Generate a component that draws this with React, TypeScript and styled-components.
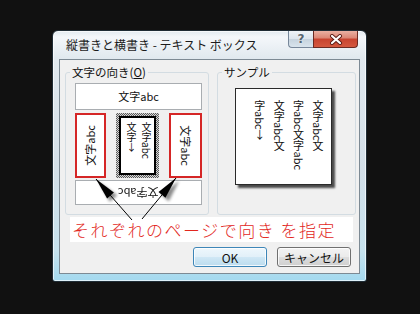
import React from 'react';
import styled, {createGlobalStyle} from 'styled-components';

const GlobalStyle = createGlobalStyle`
  html, body {
    margin: 0;
    padding: 0;
    background: #111111;
  }
  body {
    font-family: "Noto Sans CJK JP", "Noto Sans", sans-serif;
  }
`;

const Screen = styled.div`
  width: 420px;
  height: 314px;
  box-sizing: border-box;
  padding: 30px 0 0 52px;
  background: #111111;
`;

const Window = styled.div`
  width: 315px;
  height: 252px;
  box-sizing: border-box;
  display: flex;
  flex-direction: column;
  padding: 0 6px 7px 6px;
  border: 1px solid #1f2c35;
  border-radius: 6px 6px 3px 3px;
  background: linear-gradient(180deg, #e2eaf0 0, #f4f7fa 6px, #e1e9ef 27px, #d3dfe8 55%, #c6e2ee 88%, #a3d9ef 100%);
  box-shadow: inset 0 0 0 1px rgba(255, 255, 255, 0.65);
`;

const TitleBar = styled.div`
  height: 28px;
  flex: none;
  display: flex;
  align-items: flex-start;
`;

const Title = styled.div`
  align-self: center;
  margin-left: 7px;
  font-size: 12px;
  line-height: 16px;
  color: #1c1c1c;
  white-space: nowrap;
  flex: 1;
`;

const CaptionButtons = styled.div`
  display: flex;
  margin-right: 2px;
`;

const HelpButton = styled.div`
  width: 25px;
  height: 17px;
  box-sizing: border-box;
  border: 1px solid #77879a;
  border-top: none;
  border-right: none;
  border-radius: 0 0 0 4px;
  background: linear-gradient(180deg, #eef3f7 0%, #dce5ed 48%, #c6d3de 52%, #d9e4ed 100%);
  display: flex;
  align-items: center;
  justify-content: center;
  font-family: "DejaVu Sans", sans-serif;
  font-weight: bold;
  font-size: 12px;
  color: #56656f;
  text-shadow: 0 0 2px #ffffff;
`;

const CloseButton = styled.div`
  width: 45px;
  height: 17px;
  box-sizing: border-box;
  border: 1px solid #6b2a22;
  border-top: none;
  border-radius: 0 0 4px 0;
  background: linear-gradient(180deg, #eab0a2 0%, #dc8877 42%, #c84430 52%, #d4583f 100%);
  display: flex;
  align-items: center;
  justify-content: center;
`;

const Client = styled.div`
  flex: 1;
  position: relative;
  display: flex;
  flex-direction: column;
  background: #f0f0f0;
  border: 1px solid #7d8a94;
`;

const GroupsRow = styled.div`
  display: flex;
  gap: 8px;
  padding: 5px 3px 0 5px;
`;

const Group = styled.fieldset<{$width: number}>`
  margin: 0;
  width: ${p => p.$width}px;
  height: 150px;
  min-width: 0;
  box-sizing: border-box;
  padding: 4px 4px 9px 4px;
  border: 1px solid #d3dce2;
  border-radius: 3px;
`;

const Legend = styled.legend`
  padding: 0 2px;
  font-size: 11.5px;
  line-height: 14px;
  color: #111111;
`;

const Options = styled.div`
  margin-left: 5px;
  width: 127px;
  display: flex;
  flex-direction: column;
`;

const HorizBox = styled.div<{$height: number}>`
  height: ${p => p.$height}px;
  box-sizing: border-box;
  border: 1px solid #a9adb1;
  background: #ffffff;
  display: flex;
  align-items: center;
  justify-content: center;
  overflow: hidden;
`;

const VertRow = styled.div`
  height: 65px;
  margin: 3px 0 2px;
  display: flex;
  justify-content: space-between;
`;

const RedBox = styled.div<{$width: number}>`
  width: ${p => p.$width}px;
  box-sizing: border-box;
  border: 2px solid #d52626;
  background: #ffffff;
  display: flex;
  align-items: center;
  justify-content: center;
  overflow: hidden;
`;

const SelectedRing = styled.div`
  width: 43px;
  box-sizing: border-box;
  padding: 3px;
  background: repeating-conic-gradient(#5a5a5a 0 25%, #d8d8d8 0 50%) 0 0 / 2px 2px;
`;

const SelectedBox = styled.div`
  height: 100%;
  box-sizing: border-box;
  border: 2px solid #000000;
  background: #ffffff;
  display: flex;
  justify-content: center;
  padding: 4px 0 0 3px;
`;

const OptionLabel = styled.span<{$rotate: number}>`
  display: inline-block;
  font-size: 11px;
  line-height: 13px;
  white-space: nowrap;
  color: #111111;
  transform: rotate(${p => p.$rotate}deg);
`;

const VerticalText = styled.div<{$size: number; $line: number}>`
  writing-mode: vertical-rl;
  font-size: ${p => p.$size}px;
  line-height: ${p => p.$line}px;
  color: #111111;
  white-space: nowrap;
`;

const Mark = styled.span`
  text-orientation: upright;
`;

const Paper = styled.div`
  margin: 5px 0 0 13px;
  width: 97px;
  height: 97px;
  box-sizing: border-box;
  border: 1px solid #2a2a2a;
  background: #ffffff;
  box-shadow: 3px 3px 2px #4a4a4a;
  display: flex;
  justify-content: flex-end;
  padding: 11px 4px 0 0;
`;

const Band = styled.div`
  margin: 2px 6px 0 10px;
  height: 25px;
  background: #ffffff;
  padding-left: 2px;
  font-size: 17px;
  font-weight: 300;
  line-height: 25px;
  letter-spacing: 1.5px;
  color: #e2271d;
  white-space: nowrap;
`;

const ButtonRow = styled.div`
  margin-top: 5px;
  display: flex;
  justify-content: flex-end;
  gap: 10px;
  padding-right: 8px;
`;

const Button = styled.div<{$default?: boolean}>`
  width: 74px;
  height: 20px;
  box-sizing: border-box;
  border: 1px solid ${p => (p.$default ? '#3d86b8' : '#707070')};
  border-radius: 3px;
  background: ${p => p.$default
    ? 'linear-gradient(180deg, #eef7fc 0%, #e2f0f9 48%, #cfe7f5 52%, #bcdcee 100%)'
    : 'linear-gradient(180deg, #f3f3f3 0%, #ebebeb 48%, #dddddd 52%, #cfcfcf 100%)'};
  box-shadow: inset 0 0 0 1px rgba(255, 255, 255, 0.8);
  display: flex;
  align-items: center;
  justify-content: center;
  font-size: 12px;
  color: #111111;
`;

const Arrows = styled.svg`
  position: absolute;
  left: 0;
  top: 0;
  pointer-events: none;
`;

type Pt = [number, number];

const headPoints = (tip: Pt, tail: Pt, len: number, half: number): string => {
  const dx = tip[0] - tail[0];
  const dy = tip[1] - tail[1];
  const d = Math.hypot(dx, dy);
  const ux = dx / d;
  const uy = dy / d;
  const bx = tip[0] - ux * len;
  const by = tip[1] - uy * len;
  const px = -uy * half;
  const py = ux * half;
  return `${tip[0]},${tip[1]} ${bx + px},${by + py} ${bx - px},${by - py}`;
};

const arrows: {tip: Pt; tail: Pt}[] = [
  {tip: [36, 119], tail: [72, 160]},
  {tip: [116, 118], tail: [82, 159]},
];

const App = () => {
  return (
    <Screen>
      <GlobalStyle />
      <Window>
        <TitleBar>
          <Title>縦書きと横書き - テキスト ボックス</Title>
          <CaptionButtons>
            <HelpButton>?</HelpButton>
            <CloseButton>
              <svg width="14" height="11" viewBox="0 0 14 11">
                <path d="M3 2 L11 9 M11 2 L3 9" stroke="#5a1a14" strokeWidth="4" strokeLinecap="round" />
                <path d="M3 2 L11 9 M11 2 L3 9" stroke="#ffffff" strokeWidth="2.2" strokeLinecap="round" />
              </svg>
            </CloseButton>
          </CaptionButtons>
        </TitleBar>
        <Client>
          <GroupsRow>
            <Group $width={144}>
              <Legend>文字の向き(<u>O</u>)</Legend>
              <Options>
                <HorizBox $height={27}>
                  <OptionLabel $rotate={0}>文字abc</OptionLabel>
                </HorizBox>
                <VertRow>
                  <RedBox $width={31}>
                    <OptionLabel $rotate={-90}>文字abc</OptionLabel>
                  </RedBox>
                  <SelectedRing>
                    <SelectedBox>
                      <VerticalText $size={10} $line={15}>
                        文字abc<br />文字<Mark>↓</Mark>
                      </VerticalText>
                    </SelectedBox>
                  </SelectedRing>
                  <RedBox $width={33}>
                    <OptionLabel $rotate={90}>文字abc</OptionLabel>
                  </RedBox>
                </VertRow>
                <HorizBox $height={25}>
                  <OptionLabel $rotate={180}>文字abc</OptionLabel>
                </HorizBox>
              </Options>
            </Group>
            <Group $width={139}>
              <Legend>サンプル</Legend>
              <Paper>
                <VerticalText $size={11} $line={19.4}>
                  文字abc文<br />字abc文字abc<br />文字abc文<br />字abc<Mark>↓</Mark>
                </VerticalText>
              </Paper>
            </Group>
          </GroupsRow>
          <Band>それぞれのページで向き を指定</Band>
          <ButtonRow>
            <Button $default>OK</Button>
            <Button>キャンセル</Button>
          </ButtonRow>
          <Arrows width="300" height="170">
            <defs>
              <filter id="soft" x="-50%" y="-50%" width="200%" height="200%">
                <feGaussianBlur stdDeviation="1.5" />
              </filter>
            </defs>
            {arrows.map((a, i) => (
              <g key={i}>
                <polygon
                  points={headPoints([a.tip[0] + 3, a.tip[1] + 3], [a.tail[0] + 3, a.tail[1] + 3], 22, 5)}
                  fill="#000000"
                  opacity="0.45"
                  filter="url(#soft)"
                />
                <line x1={a.tail[0]} y1={a.tail[1]} x2={a.tip[0]} y2={a.tip[1]} stroke="#000000" strokeWidth="1" />
                <polygon points={headPoints(a.tip, a.tail, 22, 4.5)} fill="#000000" />
              </g>
            ))}
          </Arrows>
        </Client>
      </Window>
    </Screen>
  );
};

export default App;
